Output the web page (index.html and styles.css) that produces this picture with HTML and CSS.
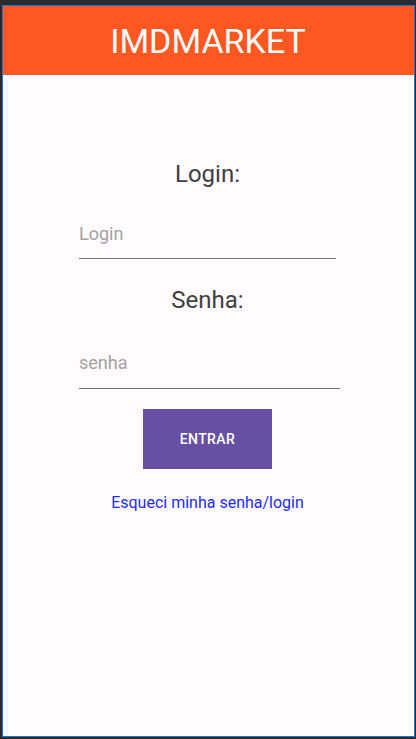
FILE: index.html
```html
<!DOCTYPE html>
<html lang="pt">
<head>
<meta charset="utf-8">
<title>IMDMARKET</title>
<link rel="stylesheet" href="styles.css">
</head>
<body>
<div class="frame">
  <header class="appbar">IMDMARKET</header>
  <main class="form">
    <h2 class="label label-login">Login:</h2>
    <input class="field field-login" type="text" placeholder="Login">
    <h2 class="label label-senha">Senha:</h2>
    <input class="field field-senha" type="password" placeholder="senha">
    <button class="btn" type="button">ENTRAR</button>
    <a class="link" href="#">Esqueci minha senha/login</a>
  </main>
</div>
</body>
</html>
```
FILE: styles.css
```css
* { box-sizing: border-box; }
html, body { margin: 0; padding: 0; }
body {
  width: 416px;
  height: 739px;
  background: #2b2b2b;
  padding: 5px 1px 2px 2px;
  font-family: Roboto, "Noto Sans", sans-serif;
  overflow: hidden;
}
.frame {
  width: 413px;
  height: 732px;
  border: 1px solid #1a73e8;
  background: #fffbfe;
  display: flex;
  flex-direction: column;
}
.appbar {
  height: 69px;
  background: #ff5722;
  color: #ffffff;
  font-size: 34px;
  line-height: 40px;
  display: flex;
  align-items: center;
  justify-content: center;
  padding-right: 1px;
  padding-top: 1px;
}
.form {
  display: flex;
  flex-direction: column;
  align-items: center;
  padding-right: 2px;
}
.label {
  margin: 0;
  font-size: 24px;
  font-weight: 400;
  line-height: 28px;
  color: #404040;
}
.label-login { margin-top: 85px; }
.label-senha { margin-top: 27px; }
.field {
  align-self: flex-start;
  margin-left: 76px;
  border: none;
  border-bottom: 1px solid #757575;
  background: transparent;
  font-family: Roboto, "Noto Sans", sans-serif;
  font-size: 18px;
  line-height: 21px;
  height: 36px;
  padding: 0 0 14px 0;
  color: #404040;
  outline: none;
}
.field::placeholder { color: #a3a3a3; }
.field-login { width: 257px; margin-top: 35px; }
.field-senha { width: 261px; margin-top: 38px; height: 37px; padding-bottom: 15px; }
.btn {
  margin-top: 20px;
  width: 129px;
  height: 60px;
  border: none;
  border-radius: 0;
  background: #6750a4;
  color: #ffffff;
  font-family: Roboto, "Noto Sans", sans-serif;
  font-size: 14px;
  font-weight: 500;
  letter-spacing: 0.4px;
  padding: 0;
}
.link {
  margin-top: 24px;
  font-size: 16px;
  line-height: 19px;
  color: #1c2dff;
  text-decoration: none;
}
```
